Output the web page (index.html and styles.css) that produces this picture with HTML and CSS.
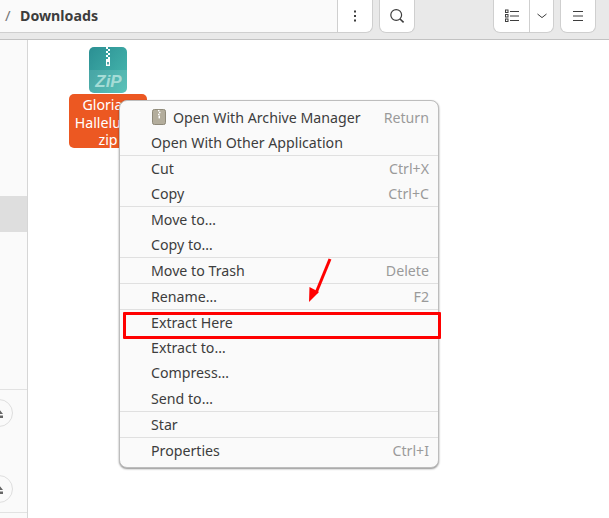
FILE: index.html
```html
<!DOCTYPE html>
<html lang="en">
<head>
<meta charset="utf-8">
<title>Downloads</title>
<link rel="stylesheet" href="styles.css">
</head>
<body>
<div class="window">
  <header class="toolbar">
    <div class="path"><span class="slash">/</span><span class="crumb">Downloads</span></div>
    <div class="tools">
      <button class="btn kebab"><svg width="16" height="16" viewBox="0 0 16 16"><g fill="#3d3d3d"><rect x="7" y="2.500" width="2" height="2"/><rect x="7" y="7" width="2" height="2"/><rect x="7" y="11.500" width="2" height="2"/></g></svg></button>
      <button class="btn search"><svg width="16" height="16" viewBox="0 0 16 16" fill="none" stroke="#3d3d3d" stroke-width="1.2"><circle cx="7.200" cy="7" r="5.400"/><path d="M11 11l3.600 3.400" stroke-width="1.600"/></svg></button>
      <div class="spacer"></div>
      <div class="btn-group">
        <button class="btn list"><svg width="14" height="14" viewBox="0 0 14 14" fill="none" stroke="#3d3d3d"><path d="M5 2.500h9M5 7h9M5 11.500h9"/><rect x="0.500" y="1" width="2.500" height="2.500"/><rect x="0.500" y="5.500" width="2.500" height="2.500"/><rect x="0.500" y="10" width="2.500" height="2.500"/></svg></button>
        <button class="btn chevron"><svg width="10" height="6" viewBox="0 0 10 6" fill="none" stroke="#3d3d3d"><path d="M.5 1l4.500 3.600L9.500 1"/></svg></button>
      </div>
      <button class="btn burger"><svg width="10" height="10" viewBox="0 0 10 10" fill="none" stroke="#3d3d3d"><path d="M0 .5h10M0 5h10M0 9.500h10"/></svg></button>
    </div>
  </header>
  <div class="content">
    <aside class="sidebar">
      <div class="side-selected"></div>
      <div class="side-sep first"></div>
      <div class="eject"><svg width="10" height="9" viewBox="0 0 10 9" fill="#666"><path d="M0 5L4 0l4 5zM0 6.500h8V9H0z"/></svg></div>
      <div class="eject second"><svg width="10" height="9" viewBox="0 0 10 9" fill="#666"><path d="M0 5L4 0l4 5zM0 6.500h8V9H0z"/></svg></div>
      <div class="side-sep last"></div>
    </aside>
    <main class="files">
      <div class="file">
        <svg class="zip" width="38" height="46" viewBox="0 0 38 46">
          <defs><linearGradient id="z" x1="0" y1="0" x2="1" y2="1"><stop offset="0" stop-color="#2b8f93"/><stop offset="1" stop-color="#49bcb1"/></linearGradient></defs>
          <rect width="38" height="46" rx="5" fill="url(#z)"/>
          <path d="M0 23h38v18a5 5 0 0 1-5 5H5a5 5 0 0 1-5-5z" fill="#fff" opacity=".1"/>
          <g fill="#fff"><rect x="17" y="0" width="2" height="2"/><rect x="19" y="2" width="2" height="2"/><rect x="17" y="4" width="2" height="2"/><rect x="19" y="6" width="2" height="2"/><rect x="17" y="8" width="2" height="2"/><rect x="19" y="10" width="2" height="2"/><rect x="17" y="12" width="4" height="7"/></g>
          <rect x="18.200" y="15" width="1.600" height="2.500" fill="#2b8f93"/>
          <text x="19.500" y="40" class="zip-text" text-anchor="middle">ZiP</text>
        </svg>
        <div class="file-label">Gloria&nbsp;&nbsp;&nbsp;<br>Hallelujah<br>zip</div>
      </div>
    </main>
  </div>
</div>

<nav class="menu">
  <div class="item"><span class="archive"><svg width="14" height="16" viewBox="0 0 14 17" preserveAspectRatio="none"><rect x=".5" y=".5" width="13" height="16" rx="2" fill="#b3ad9c" stroke="#8b8676"/><g fill="#fff"><rect x="6" y="1" width="1.500" height="1.500"/><rect x="7" y="3" width="1.500" height="1.500"/><rect x="6" y="5" width="1.500" height="1.500"/><rect x="6.500" y="7" width="1.500" height="3"/></g></svg></span><span class="label with-icon">Open With Archive Manager</span><span class="key">Return</span></div>
  <div class="item"><span class="label">Open With Other Application</span></div>
  <div class="sep"></div>
  <div class="item"><span class="label">Cut</span><span class="key">Ctrl+X</span></div>
  <div class="item"><span class="label">Copy</span><span class="key">Ctrl+C</span></div>
  <div class="sep"></div>
  <div class="item"><span class="label">Move to…</span></div>
  <div class="item"><span class="label">Copy to…</span></div>
  <div class="sep"></div>
  <div class="item"><span class="label">Move to Trash</span><span class="key">Delete</span></div>
  <div class="sep"></div>
  <div class="item"><span class="label">Rename…</span><span class="key">F2</span></div>
  <div class="sep"></div>
  <div class="item"><span class="label">Extract Here</span></div>
  <div class="item"><span class="label">Extract to…</span></div>
  <div class="item"><span class="label">Compress…</span></div>
  <div class="item tall"><span class="label">Send to…</span></div>
  <div class="sep"></div>
  <div class="item"><span class="label">Star</span></div>
  <div class="sep"></div>
  <div class="item"><span class="label">Properties</span><span class="key">Ctrl+I</span></div>
</nav>

<div class="highlight"></div>
<svg class="arrow" width="30" height="50" viewBox="0 0 30 50"><path d="M22 1L8 35" stroke="#f00" stroke-width="3" fill="none"/><path d="M1 44L1.500 29 11 34z" fill="#f00"/></svg>
</body>
</html>
```
FILE: styles.css
```css
* { box-sizing: border-box; }
html, body { margin: 0; padding: 0; height: 100%; }
body { font-family: "Noto Sans", sans-serif; color: #3d3d3d; background: #fff; overflow: hidden; position: relative; }
.window { display: flex; flex-direction: column; height: 518px; }

.toolbar { height: 40px; flex: none; display: flex; align-items: flex-start; background: #e9e9e9; border-bottom: 1px solid #c2c2c2; }
.path { width: 337px; flex: none; display: flex; align-items: center; height: 33px; padding: 0 0 2px 5px; white-space: nowrap; background: #fafafa; border-bottom: 1px solid #cfcfcf; }
.slash { color: #777; font-size: 15px; width: 15px; flex: none; }
.crumb { font-weight: 700; font-size: 14.200px; color: #3d3d3d; }
.tools { flex: 1; display: flex; padding-right: 13px; height: 33px; }
.btn { display: flex; align-items: center; justify-content: center; padding: 0; background: #fff; border: 1px solid #cfcfcf; border-top: 0; border-radius: 0 0 7px 7px; height: 33px; width: 36px; }
.btn-group { display: flex; }
.kebab { border-radius: 0 0 7px 0; }
.search { margin-left: 6px; }
.spacer { flex: 1; }
.list { border-right: 0; border-radius: 0 0 0 7px; }
.chevron { width: 25px; border-radius: 0 0 7px 0; }
.burger { margin-left: 6px; }

.content { flex: 1; display: flex; min-height: 0; }
.sidebar { width: 28px; flex: none; background: #fafafa; border-right: 1px solid #d6d6d6; display: flex; flex-direction: column; padding-top: 156px; }
.side-selected { height: 36px; background: #dedede; }
.side-sep { height: 1px; background: #e2e2e2; }
.side-sep.first { margin-top: 157px; }
.eject { width: 28px; height: 28px; margin-top: 9px; margin-left: -15px; border: 1px solid #dedede; border-radius: 50%; display: flex; align-items: center; justify-content: flex-end; padding-right: 7px; flex: none; }
.eject.second { margin-top: 48px; }
.side-sep.last { margin-top: 9px; }

.files { flex: 1; position: relative; background: #fff; }
.file { position: absolute; left: 41px; top: 7px; width: 78px; display: flex; flex-direction: column; align-items: center; }
.zip { display: block; margin-bottom: 1px; }
.zip-text { font-family: "Liberation Sans", sans-serif; font-weight: 700; font-style: italic; font-size: 17px; fill: #a5dcd6; }
.file-label { width: 78px; height: 54px; background: #ec5822; color: #fff; font-size: 14.200px; line-height: 17.500px; text-align: center; border-radius: 5px; padding-top: 2px; white-space: pre; }

.menu { position: absolute; left: 119px; top: 100px; width: 320px; height: 368px; padding: 4px 0; background: #fafafa; border: 1px solid #bdbdbd; border-radius: 8px; box-shadow: 0 1px 2px rgba(0,0,0,.45); display: flex; flex-direction: column; font-size: 14.200px; }
.item { height: 25px; flex: none; display: flex; align-items: center; padding: 0 9px 0 31px; position: relative; }
.item.tall { height: 26px; }
.label { color: #3d3d3d; flex: 1; white-space: nowrap; }
.label.with-icon { margin-left: 22px; }
.key { color: #9a9a9a; }
.archive { position: absolute; left: 32px; top: 4px; display: flex; }
.sep { height: 1px; flex: none; background: #e0e0e0; }

.highlight { position: absolute; left: 123px; top: 312px; width: 318px; height: 27px; border: 3px solid #f00; border-radius: 1px; }
.arrow { position: absolute; left: 308px; top: 258px; }
```
